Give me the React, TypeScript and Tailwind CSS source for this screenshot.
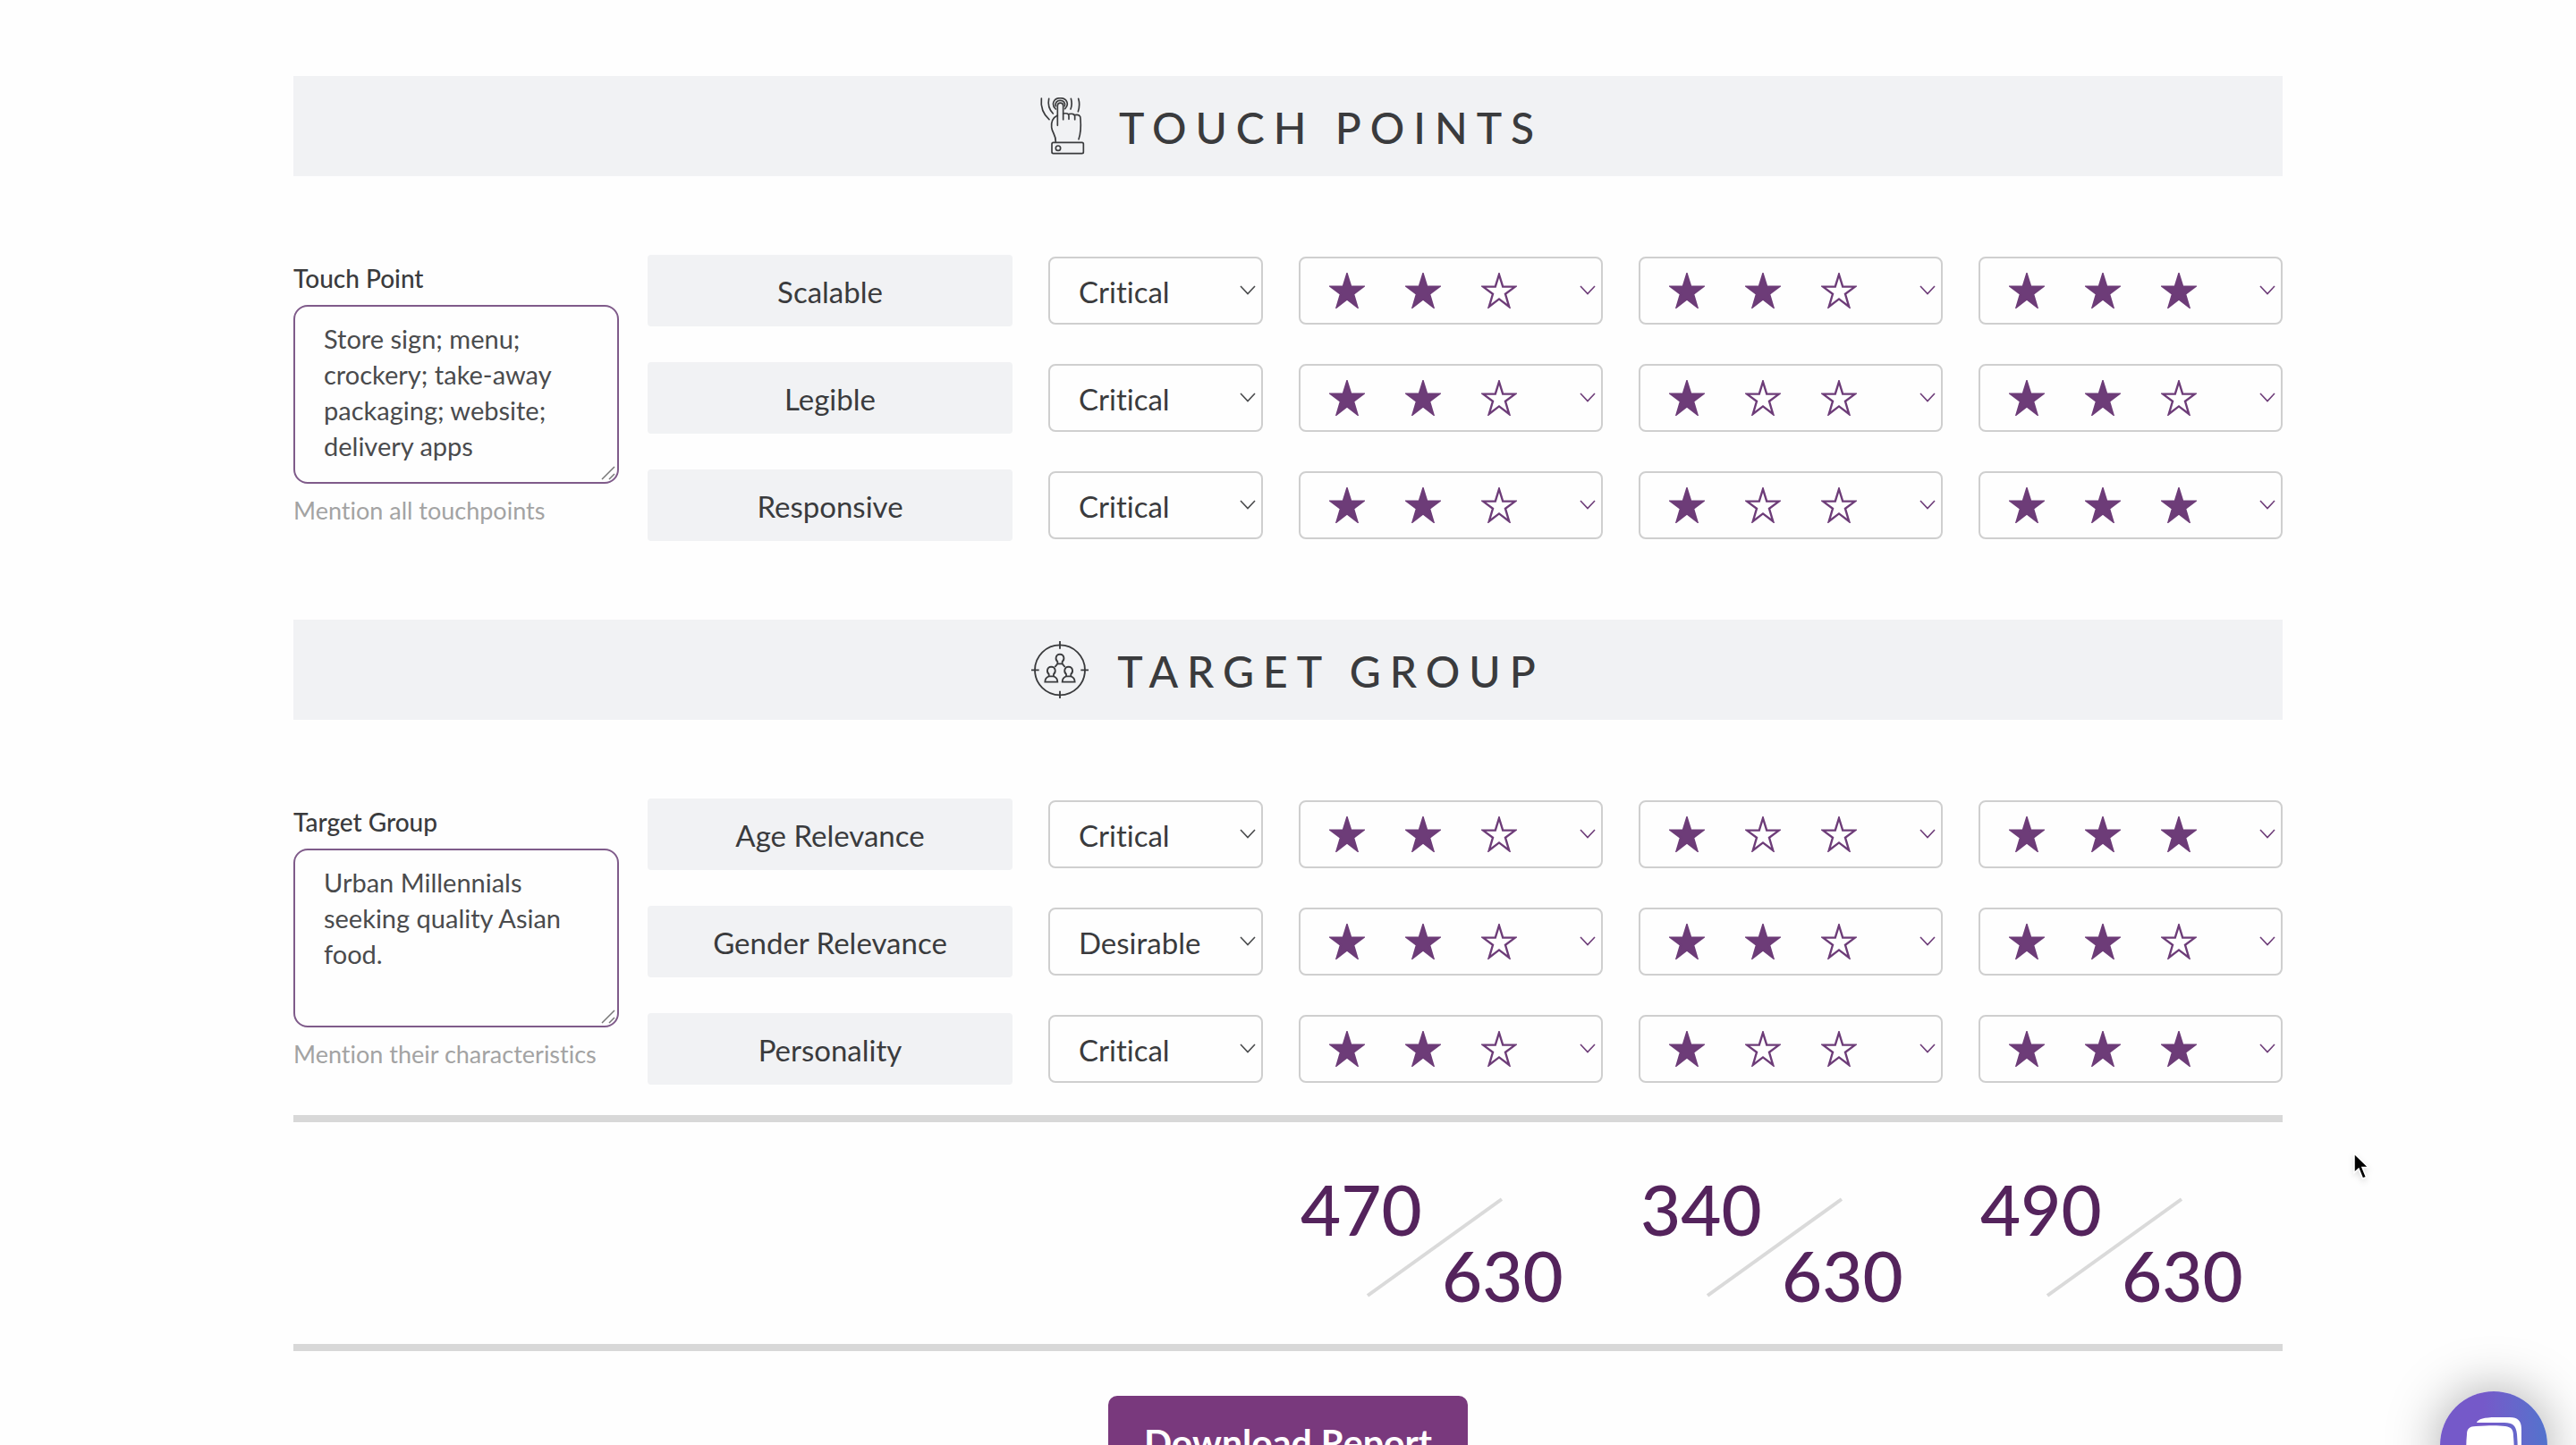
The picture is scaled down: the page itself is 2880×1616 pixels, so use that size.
import { useState } from 'react';

type Priority = 'Critical' | 'Desirable';

interface Criterion {
  name: string;
  priority: Priority;
  ratings: number[];
}

interface SectionData {
  id: string;
  title: string;
  label: string;
  hint: string;
  notes: string;
  criteria: Criterion[];
}

const sections: SectionData[] = [
  {
    id: 'touch-point',
    title: 'TOUCH POINTS',
    label: 'Touch Point',
    hint: 'Mention all touchpoints',
    notes: 'Store sign; menu; crockery; take-away packaging; website; delivery apps',
    criteria: [
      { name: 'Scalable', priority: 'Critical', ratings: [2, 2, 3] },
      { name: 'Legible', priority: 'Critical', ratings: [2, 1, 2] },
      { name: 'Responsive', priority: 'Critical', ratings: [2, 1, 3] },
    ],
  },
  {
    id: 'target-group',
    title: 'TARGET GROUP',
    label: 'Target Group',
    hint: 'Mention their characteristics',
    notes: 'Urban Millennials seeking quality Asian food.',
    criteria: [
      { name: 'Age Relevance', priority: 'Critical', ratings: [2, 1, 3] },
      { name: 'Gender Relevance', priority: 'Desirable', ratings: [2, 2, 2] },
      { name: 'Personality', priority: 'Critical', ratings: [2, 1, 3] },
    ],
  },
];

const totals = [470, 340, 490];
const maxScore = 630;

function TouchIcon() {
  return (
    <svg viewBox="12 28 192 192" className="size-16 shrink-0" fill="none" stroke="currentColor" strokeWidth="5" strokeLinecap="round" strokeLinejoin="round" aria-hidden="true">
      <path d="M40 31C37 58 46 84 66 102" />
      <path d="M65 32C61 50 66 68 79 82" />
      <path d="M88 67C72 52 80 30 103 30C126 30 134 52 119 66" />
      <path d="M88 57C85 46 92 38 103 38C114 38 121 46 118 57" />
      <path d="M94 122V56C94 43 113 43 113 56V102" />
      <path d="M113 82C124 80 132 82 132 90V101" />
      <path d="M132 84C144 81 152 84 152 92V102" />
      <path d="M152 87C164 84 172 88 171 100C173 125 173 145 165 168" />
      <path d="M94 88C78 96 72 108 74 128C76 148 89 152 88 178" />
      <path d="M139 32C143 45 143 55 138 67" />
      <path d="M164 32C169 48 169 58 163 75" />
      <rect x="75" y="179" width="106" height="37" rx="5" />
      <circle cx="96" cy="198" r="8" />
    </svg>
  );
}

function TargetIcon() {
  return (
    <svg viewBox="24 20 192 192" className="size-16 shrink-0" fill="none" stroke="currentColor" strokeWidth="5.5" aria-hidden="true">
      <circle cx="120" cy="117" r="84" />
      <path d="M120 20V46M120 187V212M24 117H50M190 117H216" />
      <path d="M112 89C104 82 104 65 120 64C136 65 136 82 128 89V96H112ZM112 96L103 107M128 96L137 107" />
      <path d="M83 131C75 124 75 107 91 106C107 107 107 124 99 131V138H83ZM83 138C75 141 70 147 70 157H112C112 147 107 141 99 138" />
      <path d="M141 131C133 124 133 107 149 106C165 107 165 124 157 131V138H141ZM141 138C133 141 128 147 128 157H170C170 147 165 141 157 138" />
    </svg>
  );
}

function Star({ filled }: { filled: boolean }) {
  return (
    <svg viewBox="0 0 40 40" className="size-10" aria-hidden="true">
      <path
        d="M20 2L24.2 15.6H38L27 23.8L31.2 38L20 29.4L8.8 38L13 23.8L2 15.6H15.8Z"
        fill={filled ? 'currentColor' : 'none'}
        stroke="currentColor"
        strokeWidth="2.4"
      />
    </svg>
  );
}

function Chevron() {
  return (
    <svg viewBox="0 0 18 11" className="pointer-events-none absolute top-8 right-2 h-[11px] w-[18px]" fill="none" stroke="currentColor" strokeWidth="1.6" aria-hidden="true">
      <path d="M1 1L9 9.5L17 1" />
    </svg>
  );
}

function PrioritySelect({ name, initial }: { name: string; initial: Priority }) {
  const [value, setValue] = useState<string>(initial);

  return (
    <div className="relative text-[#4a4b4d]">
      <select
        aria-label={`${name} priority`}
        value={value}
        onChange={(e) => setValue(e.target.value)}
        className="h-[76px] w-full appearance-none rounded-lg border-2 border-[#cfcfcf] bg-transparent pt-1 pl-8 text-[33px] text-[#3a3b3d]"
      >
        <option>Critical</option>
        <option>Desirable</option>
      </select>
      <Chevron />
    </div>
  );
}

function RatingSelect({ name, initial }: { name: string; initial: number }) {
  const [value, setValue] = useState<number>(initial);

  return (
    <div className="relative text-[#6d3c78]">
      <select
        aria-label={name}
        value={value}
        onChange={(e) => setValue(Number(e.target.value))}
        className="h-[76px] w-full appearance-none rounded-lg border-2 border-[#cfcfcf] bg-transparent text-transparent"
      >
        <option value={1}>★</option>
        <option value={2}>★★</option>
        <option value={3}>★★★</option>
      </select>
      {/* Stars drawn over the native select */}
      <div className="pointer-events-none absolute inset-y-0 left-[34px] flex items-center gap-[45px]">
        {[1, 2, 3].map((n) => (
          <Star key={n} filled={n <= value} />
        ))}
      </div>
      <Chevron />
    </div>
  );
}

function SectionHeading({ section }: { section: SectionData }) {
  return (
    <div className="flex h-28 items-center justify-center gap-8 bg-[#f1f2f4] text-[#3a3b3d]">
      {section.id === 'touch-point' ? <TouchIcon /> : <TargetIcon />}
      <h2 className="pt-1 text-5xl font-medium tracking-[10px]">{section.title}</h2>
    </div>
  );
}

function Section({ section }: { section: SectionData }) {
  const [notes, setNotes] = useState<string>(section.notes);

  return (
    <section>
      <SectionHeading section={section} />

      <div className="flex gap-8 py-[88px]">
        {/* Notes column */}
        <div className="flex w-[364px] shrink-0 flex-col pt-2.5">
          <label htmlFor={section.id} className="mb-3.5 text-[28px] leading-8 font-medium text-[#3a3b3d]">
            {section.label}
          </label>
          <div className="relative h-[200px]">
            <textarea
              id={section.id}
              value={notes}
              onChange={(e) => setNotes(e.target.value)}
              className="h-full w-full resize-none overflow-hidden rounded-2xl border-2 border-[#7f5b8a] bg-transparent px-8 py-4 text-[29px] leading-10 text-[#4a4b4d]"
            />
            <svg viewBox="0 0 16 16" className="pointer-events-none absolute right-1 bottom-1 size-4" stroke="#777" strokeWidth="1.5" aria-hidden="true">
              <path d="M1 15L15 1M9 15L15 9" />
            </svg>
          </div>
          <p className="mt-3.5 text-[27px] leading-8 text-[#a3a3a3]">{section.hint}</p>
        </div>

        {/* Criteria rows */}
        <div className="flex min-w-0 flex-1 flex-col gap-10">
          {section.criteria.map((c) => (
            <div key={c.name} className="grid grid-cols-[408fr_240fr_340fr_340fr_340fr] items-center gap-10">
              <div className="flex h-20 items-center justify-center rounded-sm bg-[#f1f2f4] pt-1 text-[33px] text-[#3a3b3d]">
                {c.name}
              </div>
              <PrioritySelect name={c.name} initial={c.priority} />
              {c.ratings.map((r, i) => (
                <RatingSelect key={i} name={`${c.name} rating, option ${i + 1}`} initial={r} />
              ))}
            </div>
          ))}
        </div>
      </div>
    </section>
  );
}

function Score({ value }: { value: number }) {
  return (
    <div className="relative text-[78px] leading-[74px] font-medium text-[#54235c]">
      <div className="pl-0.5">{value}</div>
      <div className="pl-40">{maxScore}</div>
      <svg viewBox="0 0 152 112" className="absolute top-6 left-[76px] h-28 w-[152px]" stroke="#dadada" strokeWidth="4" aria-hidden="true">
        <path d="M1 110L151 2" />
      </svg>
    </div>
  );
}

function ChatButton() {
  return (
    <button
      type="button"
      aria-label="Open chat"
      className="fixed right-8 -bottom-15 size-30 rounded-full bg-linear-to-r from-[#7559c9] from-40% to-[#5273cd] shadow-[0_0_60px_rgba(0,0,0,0.35)]"
    >
      <svg viewBox="0 0 120 120" className="size-30" aria-hidden="true">
        <path d="M41 35C42 31 50 29 62 29H78C87 29 91 33 91 42V60C91 70 89 78 86 80C87 70 87 60 86 48C85 38 81 35 72 35Z" fill="#fff" />
        <path d="M40 39C55 38 65 38 73 39C80 40 82 43 82 50C83 62 83 70 82 78C81 84 78 86 72 86H62L50 96V86H40C33 86 30 83 30 76C29 66 29 58 30 48C30 42 33 39 40 39Z" fill="#fff" />
      </svg>
    </button>
  );
}

function Cursor() {
  return (
    <svg viewBox="0 0 24 36" className="pointer-events-none fixed top-[1286px] left-[2628px] h-9 w-6 drop-shadow-md" aria-hidden="true">
      <path d="M4 4V25.5L9 21L13.5 32L17.5 30.4L13 19.5H20Z" fill="#000" stroke="#fff" strokeWidth="1.5" />
    </svg>
  );
}

function App() {
  return (
    <div className="h-screen overflow-hidden bg-[#fefefe] px-8 pt-[85px] font-[Lato,sans-serif] [font-variant-ligatures:none]">
      <main className="mx-auto w-full max-w-[2224px]">
        {sections.map((section) => (
          <Section key={section.id} section={section} />
        ))}

        {/* Totals, pulled up under the last row */}
        <div className="-mt-[54px] border-y-8 border-[#d8d8d8] pt-15 pb-10 pl-[396px]">
          <div className="grid grid-cols-[408fr_240fr_340fr_340fr_340fr] gap-10">
            <div className="col-span-2" />
            {totals.map((total) => (
              <Score key={total} value={total} />
            ))}
          </div>
        </div>

        <div className="flex justify-center pt-[50px]">
          <button type="button" className="h-[104px] rounded-[10px] bg-[#79397d] px-10 text-[41px] font-bold text-white">
            Download Report
          </button>
        </div>
      </main>

      <Cursor />
      <ChatButton />
    </div>
  );
}

export default App;
